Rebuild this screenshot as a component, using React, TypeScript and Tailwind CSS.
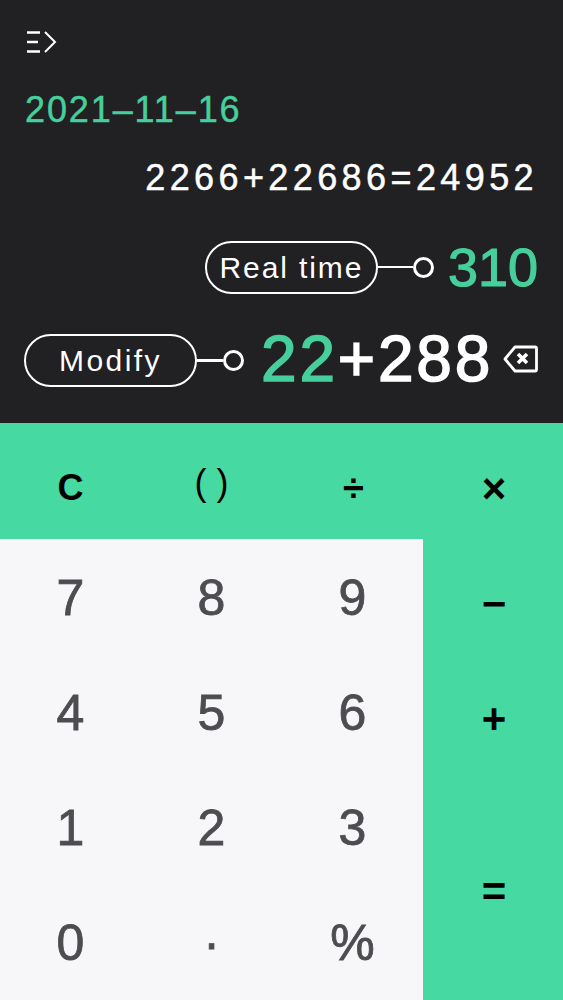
const digits = ["7", "8", "9", "4", "5", "6", "1", "2", "3", "0", "·", "%"];

function MenuIcon() {
  return (
    <svg width="32" height="24" viewBox="0 0 32 24" fill="none" stroke="white" strokeWidth="2.4">
      <path d="M2 2.5h13M2 12h11M2 21.5h13" />
      <path d="M20 2l10 10-10 10" strokeWidth="2" />
    </svg>
  );
}

function BackspaceIcon() {
  return (
    <svg width="35" height="28" viewBox="0 0 35 28" fill="none" stroke="white" strokeWidth="2.8" strokeLinejoin="round">
      <path d="M12 2h20a1.5 1.5 0 0 1 1.5 1.5v21a1.5 1.5 0 0 1-1.5 1.5H12L2 14z" />
      <path d="M15 9l9 9M24 9l-9 9" strokeWidth="3.6" />
    </svg>
  );
}

function Tag({ label, className, line }: { label: string; className: string; line: string }) {
  return (
    <div className="flex items-center">
      <div className={`flex h-[53px] items-center justify-center rounded-full border-[2.5px] border-white text-[30px] text-white ${className}`}>
        {label}
      </div>
      <div className={`h-[2.5px] bg-white ${line}`} />
      <div className="h-[21px] w-[21px] rounded-full border-[3px] border-white" />
    </div>
  );
}

export default function App() {
  return (
    <div className="flex h-[1000px] w-[563px] flex-col overflow-hidden bg-[#212023] font-['Liberation_Sans',sans-serif]">
      <div className="flex h-[423px] flex-col px-[25px]">
        <div className="pt-[30px]">
          <MenuIcon />
        </div>
        <div className="mt-[35px] text-[36px] leading-[42px] tracking-[1.9px] text-[#46cf9c] [-webkit-text-stroke:0.5px_#46cf9c]">2021–11–16</div>
        <div className="mt-[26px] text-right text-[36px] leading-[42px] tracking-[4.4px] text-white [-webkit-text-stroke:0.5px_white]">2266+22686=24952</div>
        <div className="mt-[38px] flex items-center justify-end">
          <Tag label="Real time" className="w-[173px] tracking-[1.9px]" line="w-[35px]" />
          <div className="ml-[14px] text-[54px] leading-[60px] text-[#46cf9c] [-webkit-text-stroke:1.2px_#46cf9c]">310</div>
        </div>
        <div className="mt-[29px] flex items-center">
          <Tag label="Modify" className="-ml-px w-[173px] tracking-[2.4px]" line="w-[26px]" />
          <div className="ml-[17px] whitespace-nowrap pb-[3px] text-[64px] leading-[66px] tracking-[2.8px] text-white [-webkit-text-stroke:1.5px_white]">
            <span className="text-[#46cf9c] [-webkit-text-stroke:1.5px_#46cf9c]">22</span>+288
          </div>
          <div className="ml-auto pb-[3px]">
            <BackspaceIcon />
          </div>
        </div>
      </div>

      <div className="flex flex-1 flex-col bg-[#46daa2] text-black">
        <div className="grid h-[116px] grid-cols-[141px_141px_141px_140px] pt-[14px] text-center [&>div]:flex [&>div]:items-center [&>div]:justify-center">
          <div className="text-[36px] font-bold">C</div>
          <div className="pb-[10px] text-[36px]">( )</div>
          <div className="pl-[2px] text-[38px] font-bold">÷</div>
          <div className="pl-[2px] text-[42px] font-bold">×</div>
        </div>
        <div className="flex flex-1">
          <div className="grid w-[423px] grid-cols-3 grid-rows-4 bg-[#f7f6f9] text-[50px] text-[#4d4c50] [-webkit-text-stroke:0.8px_#4d4c50]">
            {digits.map((d) => (
              <div key={d} className="flex items-center justify-center pt-[3px]">
                {d}
              </div>
            ))}
          </div>
          <div className="flex flex-1 flex-col pl-[2px] text-[42px] font-bold">
            <div className="flex h-[115px] items-center justify-center pt-[14px]">−</div>
            <div className="flex h-[115px] items-center justify-center pt-[14px]">+</div>
            <div className="flex flex-1 items-center justify-center pt-[14px]">=</div>
          </div>
        </div>
      </div>
    </div>
  );
}
